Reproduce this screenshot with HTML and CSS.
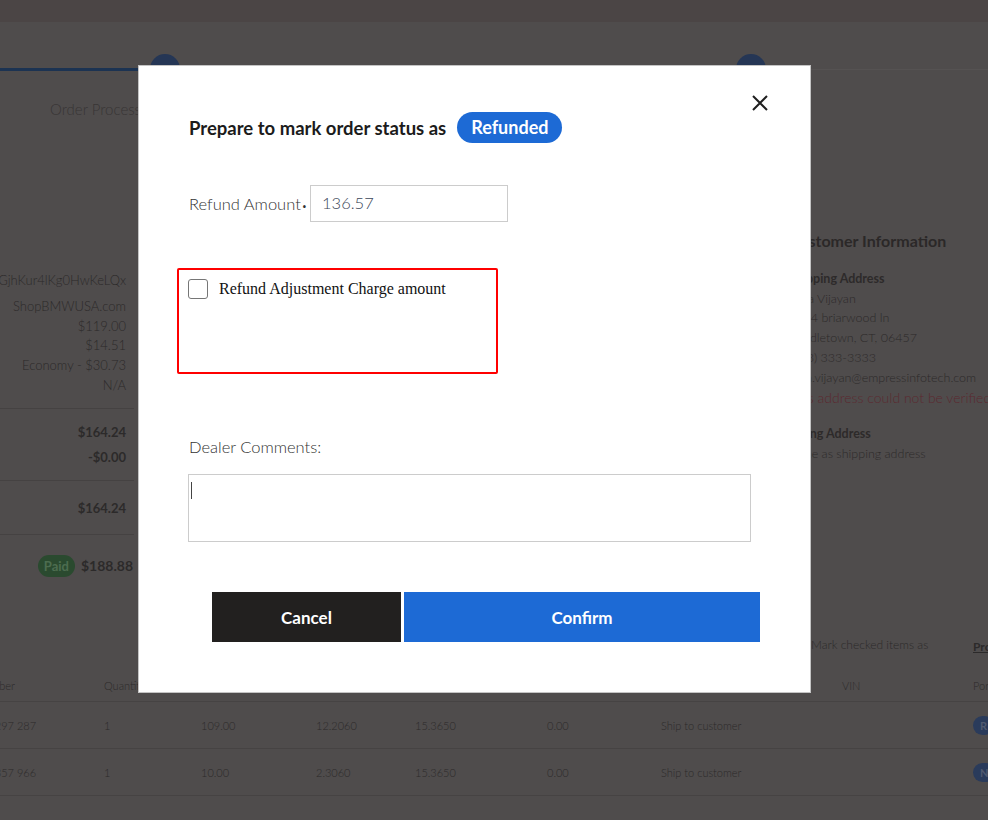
FILE: index.html
```html
<!DOCTYPE html>
<html>
<head>
<meta charset="utf-8">
<link rel="stylesheet" href="styles.css">
</head>
<body>
<div class="page">
  <div class="alert-band"></div>
  <div class="stepper">
    <div class="step-line done"></div>
    <div class="step-line"></div>
    <span class="step-dot dot-1"></span>
    <span class="step-dot dot-2"></span>
    <div class="step-label">Order Processing</div>
  </div>
  <div class="content">
    <div class="summary">
      <div class="sum-block">
        <div class="first">oGjhKur4lKg0HwKeLQx</div>
        <div>ShopBMWUSA.com</div>
        <div>$119.00</div>
        <div>$14.51</div>
        <div>Economy - $30.73</div>
        <div>N/A</div>
      </div>
      <div class="sum-block bold tot">
        <div>$164.24</div>
        <div>-$0.00</div>
      </div>
      <div class="sum-block bold tot2">
        <div>$164.24</div>
      </div>
      <div class="sum-paid bold"><span class="paid">Paid</span><span>$188.88</span></div>
    </div>
    <div class="customer">
      <div class="cust-title">Customer Information</div>
      <div class="cust-sub">Shipping Address</div>
      <div>Uma Vijayan</div>
      <div>1234 briarwood ln</div>
      <div>Middletown, CT, 06457</div>
      <div>(203) 333-3333</div>
      <div>uma.vijayan@empressinfotech.com</div>
      <div class="cust-err">This address could not be verified</div>
      <div class="cust-sub second">Billing Address</div>
      <div>Same as shipping address</div>
    </div>
  </div>
  <div class="mark-row">
    <span class="mark-text">Mark checked items as</span>
    <span class="mark-link">Processing</span>
  </div>
  <div class="items">
    <div class="row head">
      <span>Part Number</span><span>Quantity</span><span></span><span></span><span></span><span></span><span></span><span class="vin">VIN</span><span>Portal</span>
    </div>
    <div class="row">
      <span>51 11 7 297 287</span><span>1</span><span>109.00</span><span>12.2060</span><span>15.3650</span><span>0.00</span><span>Ship to customer</span><span></span><span><i class="pill">R</i></span>
    </div>
    <div class="row">
      <span>51 13 7 357 966</span><span>1</span><span>10.00</span><span>2.3060</span><span>15.3650</span><span>0.00</span><span>Ship to customer</span><span></span><span><i class="pill">N</i></span>
    </div>
  </div>

  <div class="modal">
    <button class="close" aria-label="Close">
      <svg width="18" height="18" viewBox="0 0 18 18"><path d="M2 2L16 16M16 2L2 16" stroke="#1f1f1f" stroke-width="2" fill="none"/></svg>
    </button>
    <div class="title-row">
      <span class="title">Prepare to mark order status as</span>
      <span class="badge">Refunded</span>
    </div>
    <div class="amount-row">
      <label class="amount-label">Refund Amount<span class="req">•</span></label>
      <div class="amount-input">136.57</div>
    </div>
    <div class="adjust-box">
      <span class="checkbox"></span>
      <span class="adjust-text">Refund Adjustment Charge amount</span>
    </div>
    <div class="comments-label">Dealer Comments:</div>
    <div class="comments"><span class="caret"></span></div>
    <div class="actions">
      <button class="btn cancel">Cancel</button>
      <button class="btn confirm">Confirm</button>
    </div>
  </div>
</div>
</body>
</html>
```

FILE: styles.css
```css
* { box-sizing: border-box; }
html, body { margin: 0; padding: 0; }
body {
  width: 988px;
  height: 820px;
  overflow: hidden;
  font-family: "Lato", "Liberation Sans", sans-serif;
  background: #4f4c4c;
}
.page {
  position: relative;
  width: 988px;
  height: 820px;
  overflow: hidden;
  background: #4f4c4c;
  color: #2c2a2a;
}
.alert-band {
  height: 22px;
  background: #4b4545;
}
.stepper {
  position: relative;
  height: 120px;
}
.step-line {
  position: absolute;
  top: 47px;
  left: 0;
  width: 988px;
  height: 1px;
  background: #555252;
}
.step-line.done {
  top: 46px;
  width: 160px;
  height: 3px;
  background: #1c3352;
  z-index: 1;
}
.step-dot {
  position: absolute;
  top: 32px;
  width: 30px;
  height: 30px;
  border-radius: 50%;
  background: #253655;
  z-index: 2;
}
.dot-1 { left: 150px; }
.dot-2 { left: 736px; }
.step-label {
  position: absolute;
  top: 78px;
  left: 50px;
  font-size: 15px;
  font-weight: 300;
  color: #383535;
}
.content {
  display: flex;
  justify-content: space-between;
  height: 496px;
  padding-top: 129px;
}
.summary {
  width: 134px;
  font-size: 13px;
  font-weight: 300;
  text-align: right;
}
.sum-block {
  padding-right: 8px;
  border-bottom: 1px solid #454242;
  line-height: 19.8px;
  padding-bottom: 12px;
  margin-left: -40px;
}
.sum-block .first { margin-bottom: 6px; }
.sum-block.bold { font-weight: 700; font-size: 13px; }
.tot { padding-top: 11px; line-height: 25px; padding-bottom: 10px; }
.tot2 { padding-top: 18px; padding-bottom: 15px; }
.bold { font-weight: 700; }
.sum-paid {
  display: flex;
  justify-content: flex-end;
  align-items: center;
  gap: 6px;
  padding-top: 20px;
  font-size: 14px;
  margin-right: 1px;
}
.paid {
  background: #2a4a2f;
  color: #4d6d50;
  border-radius: 11px;
  padding: 3px 6px;
  font-size: 13px;
}
.customer {
  width: 200px;
  margin-right: -1px;
  font-size: 12.5px;
  font-weight: 300;
  line-height: 19.8px;
  white-space: nowrap;
  color: #2d2a2a;
}
.cust-title {
  font-size: 16px;
  font-weight: 700;
  margin-top: -40px;
  margin-bottom: 18px;
  color: #2b2828;
}
.cust-sub { font-weight: 700; }
.cust-sub.second { margin-top: 17px; }
.cust-err { color: #5b2a30; font-size: 14px; }
.mark-row {
  position: relative;
  height: 30px;
  font-size: 12px;
  font-weight: 300;
}
.mark-text { position: absolute; left: 811px; top: -1px; }
.mark-link { position: absolute; left: 973px; top: 1px; font-weight: 700; text-decoration: underline; }
.items {
  margin-left: -46px;
  margin-top: 2px;
  font-size: 11px;
  font-weight: 300;
}
.row {
  display: grid;
  grid-template-columns: 150px 97px 115px 99px 132px 114px 181px 131px 80px;
  align-items: center;
  height: 47px;
  border-bottom: 1px solid #464343;
}
.row.head { height: 32px; }
.pill {
  display: inline-block;
  font-style: normal;
  background: #2a3b5b;
  color: #505a70;
  border-radius: 10px;
  padding: 3px 7px;
  font-weight: 700;
}

/* Modal */
.modal {
  position: absolute;
  z-index: 10;
  left: 138px;
  top: 65px;
  width: 673px;
  height: 628px;
  background: #ffffff;
  border: 1px solid #c4c4c4;
  padding: 46px 0 0 50px;
  color: #222222;
}
.close {
  position: absolute;
  left: 611px;
  top: 27px;
  width: 20px;
  height: 20px;
  padding: 0;
  border: 0;
  background: none;
  display: flex;
  align-items: center;
  justify-content: center;
}
.title-row {
  display: flex;
  align-items: center;
  gap: 11px;
  height: 31px;
}
.title {
  font-size: 18.5px;
  font-weight: 700;
  color: #1b1b1b;
}
.badge {
  background: #1d6ad5;
  color: #ffffff;
  font-size: 18px;
  font-weight: 700;
  height: 31px;
  line-height: 31px;
  padding: 0 14px;
  border-radius: 16px;
}
.amount-row {
  display: flex;
  align-items: center;
  margin-top: 42px;
  height: 37px;
}
.amount-label {
  font-size: 16.5px;
  font-weight: 300;
  color: #333;
}
.req { font-size: 9px; margin-left: 1px; margin-right: 3px; }
.amount-input {
  width: 198px;
  height: 37px;
  border: 1px solid #cccccc;
  padding: 0 11px;
  line-height: 35px;
  font-size: 16.5px;
  font-weight: 300;
  color: #3b4658;
}
.adjust-box {
  margin-top: 46px;
  margin-left: -12px;
  width: 321px;
  height: 106px;
  border: 2px solid #ff0000;
  border-radius: 2px;
  display: flex;
  align-items: flex-start;
  padding: 9px 0 0 9px;
}
.checkbox {
  width: 20px;
  height: 20px;
  border: 1px solid #767676;
  border-radius: 3px;
  flex: none;
}
.adjust-text {
  margin-left: 11px;
  font-family: "Liberation Serif", "Times New Roman", serif;
  font-size: 16px;
  line-height: 20px;
  color: #111;
}
.comments-label {
  margin-top: 63px;
  font-size: 16.5px;
  font-weight: 300;
  color: #333;
}
.comments {
  margin-top: 17px;
  margin-left: -1px;
  width: 563px;
  height: 68px;
  border: 1px solid #cccccc;
  padding: 7px 0 0 2px;
}
.caret {
  display: block;
  width: 1px;
  height: 17px;
  background: #444;
}
.actions {
  display: flex;
  gap: 3px;
  margin-top: 50px;
  margin-left: 23px;
}
.btn {
  height: 50px;
  border: 0;
  color: #ffffff;
  font-family: "Lato", "Liberation Sans", sans-serif;
  font-size: 17px;
  font-weight: 700;
}
.cancel { width: 189px; background: #22201f; }
.confirm { width: 356px; background: #1d6ad5; }
```
